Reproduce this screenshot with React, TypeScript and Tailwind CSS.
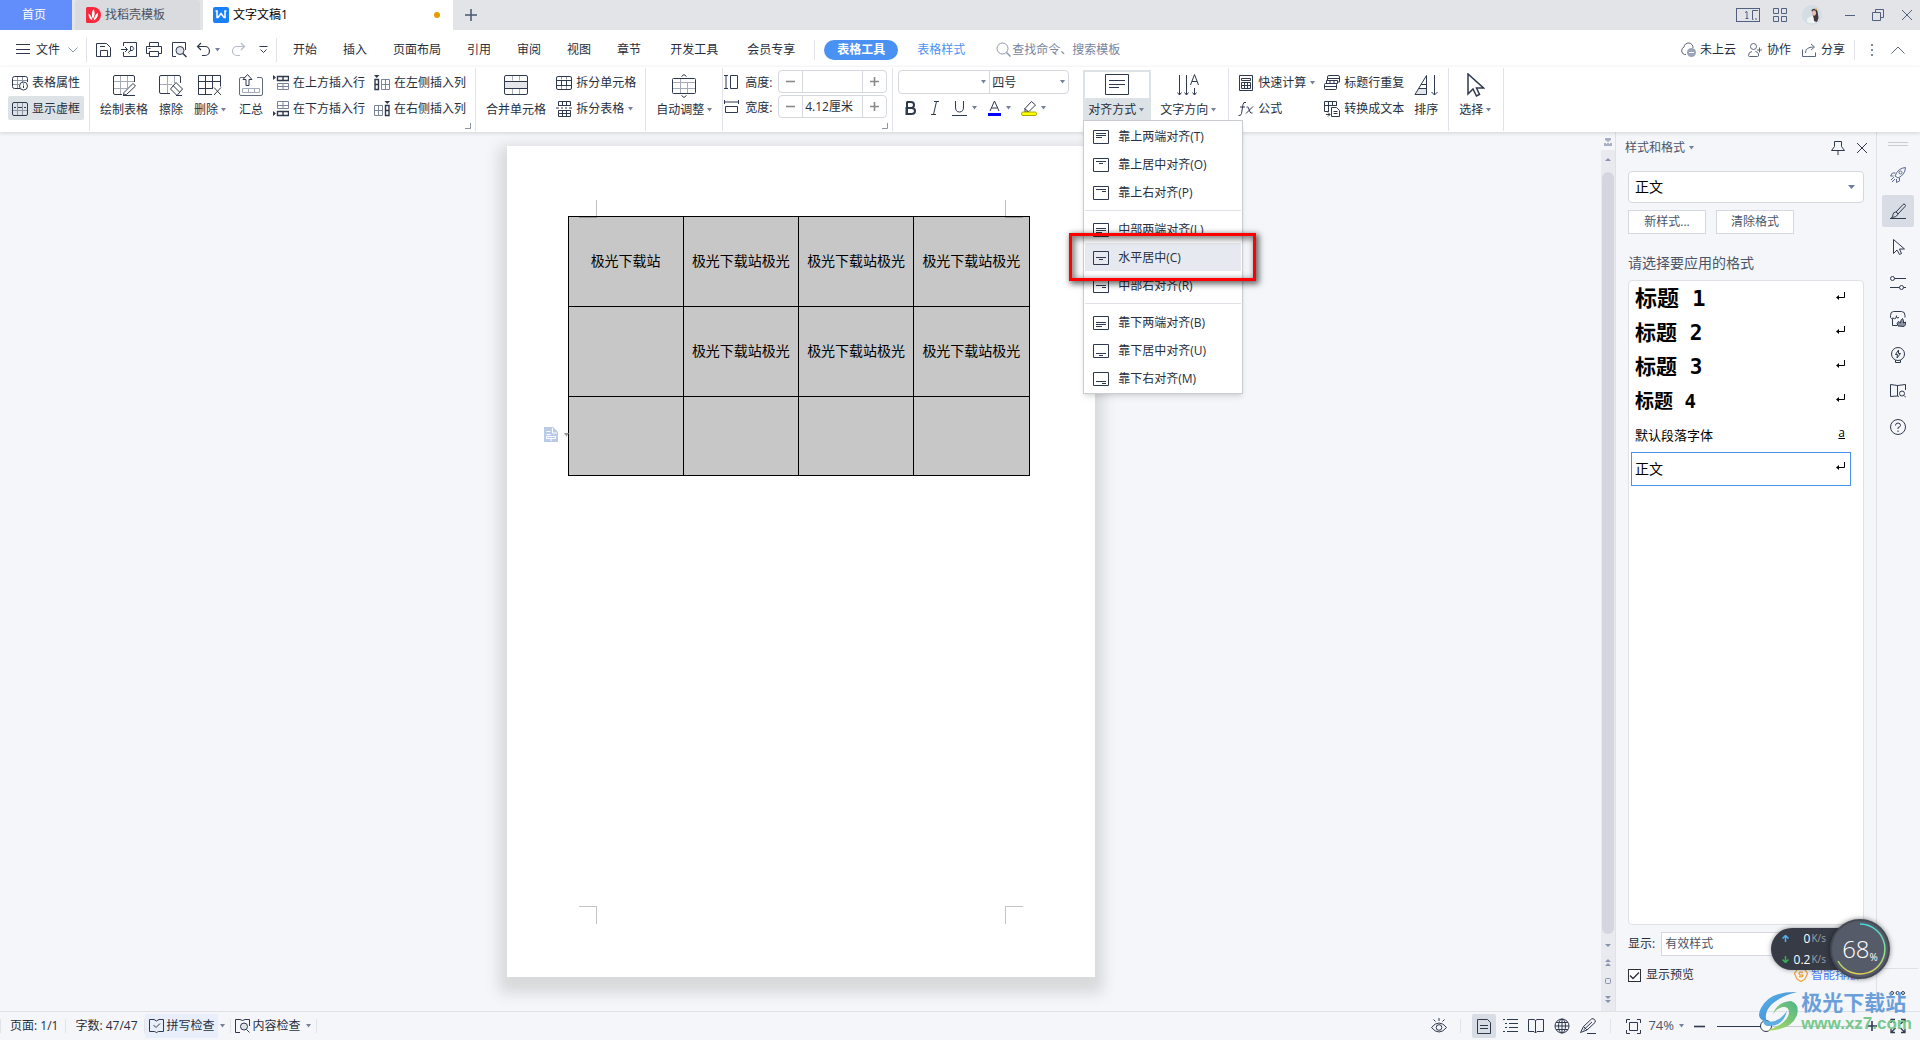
import { useState, type ReactNode } from "react";

const INK = "#2f394d";

interface IconProps {
  w?: number;
  h?: number;
  color?: string;
  className?: string;
  children: ReactNode;
}

function Icon({ w = 16, h = 16, color = INK, className = "", children }: IconProps) {
  return (
    <svg
      width={w}
      height={h}
      viewBox={`0 0 ${w} ${h}`}
      fill="none"
      stroke={color}
      className={`shrink-0 ${className}`}
      aria-hidden="true"
    >
      {children}
    </svg>
  );
}

function Caret({ className = "" }: { className?: string }) {
  return (
    <svg width="5" height="4" viewBox="0 0 5 4" fill="#75819b" className={`shrink-0 ${className}`} aria-hidden="true">
      <path d="M0 0h5L2.5 3.4z" />
    </svg>
  );
}

function Divider({ className = "" }: { className?: string }) {
  return <div className={`w-px shrink-0 bg-[#e1e3e8] ${className}`} />;
}

function BigButton({ icon, label, caret, className = "" }: { icon: ReactNode; label: string; caret?: boolean; className?: string }) {
  return (
    <button className={`flex flex-col items-center gap-1.5 self-start pt-[7px] shrink-0 ${className}`}>
      {icon}
      <span className="flex items-center gap-[3px] whitespace-nowrap">
        {label}
        {caret && <Caret />}
      </span>
    </button>
  );
}

function SmallButton({ icon, label, caret, className = "" }: { icon: ReactNode; label: string; caret?: boolean; className?: string }) {
  return (
    <button className={`flex h-6 items-center gap-1 pt-0.5 whitespace-nowrap ${className}`}>
      {icon}
      {label}
      {caret && <Caret />}
    </button>
  );
}

function SmallColumn({ children, className = "" }: { children: ReactNode; className?: string }) {
  return <div className={`flex shrink-0 flex-col gap-0.5 self-start pt-[3px] ${className}`}>{children}</div>;
}

function Corner() {
  return (
    <Icon w={6} h={6} color="#8b95a9" className="absolute right-1 bottom-[3px]">
      <path d="M5.5 0v5.5H0" />
    </Icon>
  );
}

/* ---------- title bar ---------- */

function TitleBar() {
  return (
    <header className="flex h-[30px] items-stretch bg-[#e2e4e8]">
      <button className="w-[72px] bg-[#628efb] pr-1 text-white">首页</button>
      <button className="ml-[3px] flex w-[125px] items-center gap-1 rounded-t-sm bg-[#d9dbde] pl-[11px] text-[#4a5161]">
        <svg width="15" height="16" viewBox="0 0 15 16" aria-hidden="true">
          <path d="M1.5 0H7a8 8 0 0 1 0 16H1.500Q0 16 0 14.500V1.500Q0 0 1.500 0z" fill="#f8273b" />
          <path d="M7.500 2q2.500 4-.5 10Q4.500 7 7.500 2zM2.500 6.500q3.500 2 3.800 7-3.800-2-3.800-7zM12 5.500q.5 5.500-4.200 8Q8 8.500 12 5.500z" fill="#fff" />
        </svg>
        找稻壳模板
      </button>
      <button className="ml-[3px] flex w-[250px] items-center gap-1 bg-white pl-2.5 text-black">
        <svg width="16" height="16" viewBox="0 0 16 16" aria-hidden="true">
          <rect width="16" height="16" rx="2" fill="#1a80f8" />
          <path d="M2.500 4h1.500v6.500h1l3-4 3 4h1V4h1.500" fill="none" stroke="#fff" strokeWidth="1.500" />
        </svg>
        文字文稿1
        <span className="mr-[13px] ml-auto size-1.5 rounded-full bg-[#e69b00]" />
      </button>
      <button aria-label="新建" className="ml-3 flex items-center">
        <Icon w={12} h={12} color="#4a5670">
          <path d="M6 0v12M0 6h12" strokeWidth="1.500" />
        </Icon>
      </button>
      <div className="ml-auto flex items-center pr-2">
        <Icon w={24} h={14} color="#52607f">
          <rect x=".5" y=".5" width="23" height="13" />
          <path d="M22 2.500h-5.500v9M16.500 11.500h1M19 11h2M9 4.500l2-1v7.500M9.500 10.500h3" />
        </Icon>
        <Icon w={14} h={14} color="#52607f" className="ml-[13px]">
          <path d="M.5.5h5v5h-5zM8.500.5h5v5h-5zM.5 8.500h5v5h-5zM8.500 8.500h5v5h-5z" />
        </Icon>
        <svg width="20" height="20" viewBox="0 0 20 20" className="ml-[15px]" aria-hidden="true">
          <circle cx="10" cy="10" r="10" fill="#d3dde3" />
          <path d="M9.500 5q3.500-3 6 1l1 7-1.500 4-3-1-1-5z" fill="#43363b" />
          <ellipse cx="12" cy="8" rx="2" ry="2.800" fill="#e7bfb5" />
          <path d="M5 14q3-3.500 6-3l1.500 7q-5 1-7.500-1z" fill="#edf2f3" />
          <circle cx="14" cy="4" r="1" fill="#dfb457" />
        </svg>
        <Divider className="ml-[10px] h-5 bg-[#c6c9d0]" />
        <button aria-label="最小化" className="ml-3">
          <Icon w={10} h={10} color="#52607f">
            <path d="M0 5.500h10" />
          </Icon>
        </button>
        <button aria-label="还原" className="ml-[17px]">
          <Icon w={12} h={12} color="#52607f">
            <path d="M.5 3.500h8v8h-8zM3.500 3.500v-3h8v8h-3" />
          </Icon>
        </button>
        <button aria-label="关闭" className="ml-[18px]">
          <Icon w={10} h={10} color="#52607f">
            <path d="M0 0l10 10M10 0L0 10" />
          </Icon>
        </button>
      </div>
    </header>
  );
}

/* ---------- menu row ---------- */

const tabs = ["开始", "插入", "页面布局", "引用", "审阅", "视图", "章节"];

function MenuRow() {
  return (
    <div className="flex h-[37px] items-center pt-0.5 pl-4 whitespace-nowrap">
      <button className="flex items-center">
        <Icon w={14} h={11}>
          <path d="M0 .5h14M0 5.500h14M0 9.500h14" />
        </Icon>
        <span className="ml-1.5">文件</span>
        <Icon w={10} h={6} color="#8b95a9" className="ml-2">
          <path d="M.5.5L5 5 9.500.5" />
        </Icon>
      </button>
      <Divider className="ml-2 h-6" />
      <div className="ml-[9px] flex items-center gap-[9px]">
        <button aria-label="保存">
          <Icon>
            <path d="M.5 1.500h10l4 4v9h-14zM4.500 14.500v-6h7v6M4 4.500h5" />
          </Icon>
        </button>
        <button aria-label="输出为PDF">
          <Icon>
            <path d="M2.500 4V.5h13v14h-13V10M0 7.500h6M4 5l2.500 2.500L4 10" />
            <path d="M8.500 11.500q-2-1-.5-2l1.500-.5V4.500h2q2.500 2 0 4H9.500" />
          </Icon>
        </button>
        <button aria-label="打印">
          <Icon>
            <path d="M3.500 4V.5h9V4M3.500 11.500h-3v-7h15v7h-3M3.500 9.500h9v5h-9zM2.500 6.500h2" />
          </Icon>
        </button>
        <button aria-label="打印预览">
          <Icon>
            <path d="M5 14.500H1.500V.5h13V8" />
            <circle cx="9" cy="8.500" r="4" fill="#dfe3e8" />
            <path d="M12 11.500l3.500 3.500" strokeWidth="1.500" />
          </Icon>
        </button>
        <button aria-label="撤销" className="flex items-center gap-[3px]">
          <Icon>
            <path d="M5 1L1.500 4.500 5 8M1.500 4.500H9a4.500 4.500 0 0 1 0 9H6" strokeWidth="1.200" />
          </Icon>
          <Caret />
        </button>
      </div>
      <button aria-label="恢复" className="ml-2.5">
        <Icon color="#b4bac6">
          <path d="M11 1l3.500 3.500L11 8M14.500 4.500H7a4.500 4.500 0 0 0 0 9h3" strokeWidth="1.200" />
        </Icon>
      </button>
      <button aria-label="自定义快速访问" className="ml-[13px]">
        <Icon w={9} h={8}>
          <path d="M.5.500h8M1.500 3.500l3 3 3-3" />
        </Icon>
      </button>
      <Divider className="ml-2 h-6" />
      <nav className="ml-4 flex items-center gap-[26px]">
        {tabs.map((t) => (
          <button key={t}>{t}</button>
        ))}
      </nav>
      <button className="ml-[29px]">开发工具</button>
      <button className="ml-[29px]">会员专享</button>
      <Divider className="ml-[19px] h-5" />
      <button className="ml-[9px] h-5 rounded-full bg-[#4991f2] px-[13px] font-bold text-white">表格工具</button>
      <button className="ml-[19px] text-[#4991f2]">表格样式</button>
      <label className="ml-[31px] flex items-center">
        <Icon w={15} h={15} color="#8b97ae">
          <circle cx="6.500" cy="6.500" r="5.500" />
          <path d="M10.500 10.500l4 4" strokeWidth="1.400" />
        </Icon>
        <input aria-label="查找" placeholder="查找命令、搜索模板" className="ml-px w-32 outline-none placeholder:text-[#7785a0]" />
      </label>
      <div className="ml-auto flex items-center pr-[15px]">
        <button className="flex items-center gap-1">
          <Icon color="#5c6679">
            <path d="M6 12.500H4.500A4 4 0 0 1 4 5a4.500 4.500 0 0 1 9 1" />
            <circle cx="11.500" cy="10.500" r="4.500" fill="#9aa4b8" stroke="none" />
            <path d="M9 10.500h5" stroke="#fff" />
          </Icon>
          未上云
        </button>
        <button className="ml-3 flex items-center gap-1">
          <Icon w={15} h={14} color="#5c6679">
            <circle cx="5.500" cy="3.500" r="3" />
            <path d="M4 8.500q-3.500.5-3.500 4 0 1 1 1h8q1.500 0 1-2.500-.5-2-3-2.500M11.500 4.500v5M9 7h5" />
          </Icon>
          协作
        </button>
        <button className="ml-[11px] flex items-center gap-[5px]">
          <Icon w={14} h={14} color="#5c6679">
            <path d="M.5 6.500v7h13v-4M3.500 10q0-6 8-6M9 1l3.500 3L9 7" />
          </Icon>
          分享
        </button>
        <Divider className="ml-[9px] h-5" />
        <button aria-label="更多" className="ml-4 text-[#7d879b]">
          <svg width="3" height="12" viewBox="0 0 3 12" fill="currentColor" aria-hidden="true">
            <path d="M0 0h2v2H0zM0 5h2v2H0zM0 10h2v2H0z" />
          </svg>
        </button>
        <button aria-label="折叠功能区" className="ml-[17px]">
          <Icon w={14} h={8} color="#5c6679">
            <path d="M.5 7.500L7 1l6.500 6.500" />
          </Icon>
        </button>
      </div>
    </div>
  );
}

/* ---------- ribbon ---------- */

function SizeBox({ id, label, value, icon }: { id: string; label: string; value: string; icon: ReactNode }) {
  const [v, setV] = useState(value);
  return (
    <div className="flex h-[23px] items-center">
      {icon}
      <label htmlFor={id} className="ml-[6px] w-7 pt-0.5">
        {label}
      </label>
      <div className="ml-[5px] flex h-[23px] w-[109px] rounded-sm border border-[#d5d8dd]">
        <button aria-label={`减小${label}`} className="flex w-6 items-center justify-center border-r border-[#d5d8dd]">
          <Icon w={9} h={9} color="#8a8a8a">
            <path d="M0 4.500h9" strokeWidth="1.600" />
          </Icon>
        </button>
        <input id={id} value={v} onChange={(e) => setV(e.target.value)} className="w-0 flex-1 pt-px pl-0.5 outline-none" />
        <button aria-label={`增大${label}`} className="flex w-6 items-center justify-center border-l border-[#d5d8dd]">
          <Icon w={9} h={9} color="#8a8a8a">
            <path d="M0 4.500h9M4.500 0v9" strokeWidth="1.600" />
          </Icon>
        </button>
      </div>
    </div>
  );
}

interface AlignItem {
  label: string;
  lines: string;
}

const alignGroups: AlignItem[][] = [
  [
    { label: "靠上两端对齐(T)", lines: "M3 3.500h10M3 5.500h10M3 7.500h6" },
    { label: "靠上居中对齐(O)", lines: "M3 3.500h10M6 5.500h4" },
    { label: "靠上右对齐(P)", lines: "M3 3.500h10M9 5.500h4" },
  ],
  [
    { label: "中部两端对齐(L)", lines: "M3 5.500h10M3 7.500h10M3 9.500h6" },
    { label: "水平居中(C)", lines: "M3 6.500h10M6 8.500h4" },
    { label: "中部右对齐(R)", lines: "M3 6.500h10M9 8.500h4" },
  ],
  [
    { label: "靠下两端对齐(B)", lines: "M3 6.500h10M3 8.500h10M3 10.500h6" },
    { label: "靠下居中对齐(U)", lines: "M3 9.500h10M6 11.500h4" },
    { label: "靠下右对齐(M)", lines: "M3 9.500h10M9 11.500h4" },
  ],
];

function AlignMenu() {
  return (
    <div className="absolute top-[50px] left-0 z-20 w-40 border border-[#c9ccd1] bg-white p-px shadow-md">
      {alignGroups.map((group, i) => (
        <div key={i}>
          {i > 0 && (
            <div className="flex h-[9px] items-center">
              <div className="h-px w-full bg-[#dfe1e6]" />
            </div>
          )}
          {group.map((item) => (
            <button
              key={item.label}
              className={`flex h-7 w-full items-center gap-[9px] pt-0.5 pl-2 whitespace-nowrap ${item.label === "水平居中(C)" ? "bg-[#e6e9ef]" : ""}`}
            >
              <Icon w={16} h={14}>
                <path d="M.5.5h15v13H.5z" />
                <path d={item.lines} />
              </Icon>
              {item.label}
            </button>
          ))}
        </div>
      ))}
      <div className="pointer-events-none absolute top-[112px] -left-[15px] h-12 w-[187px] border-[3px] border-[#fe0000] shadow-[2px_2px_6px_1px_rgba(0,0,0,0.6),inset_2px_2px_6px_1px_rgba(0,0,0,0.5)]" />
    </div>
  );
}

function Ribbon() {
  return (
    <div className="relative z-10 flex h-[65px] items-stretch bg-white pl-2 shadow-[0_1px_4px_rgba(0,0,0,0.15)]">
      <SmallColumn>
        <SmallButton
          className="px-1"
          label="表格属性"
          icon={
            <Icon>
              <path d="M1 5.500h14M1 9.500h6M5.500 2v12M10.500 2v5" stroke="#8d95a3" />
              <path d="M8 13.500H2.500q-2 0-2-2v-8q0-2 2-2h11q2 0 2 2V7" />
              <circle cx="11.500" cy="11" r="4" fill="#fff" />
              <path d="M11.500 10.500V13M11.500 8.500v1" />
            </Icon>
          }
        />
        <SmallButton
          className="rounded-xs bg-[#dde2e7] px-1"
          label="显示虚框"
          icon={
            <Icon>
              <path d="M1 9.500h14M5.500 2v12M10.500 2v12" stroke="#8d95a3" />
              <rect x=".5" y="1.500" width="15" height="13" rx="1.500" />
              <path d="M2 6.500h2M6 6.500h4M12 6.500h2" />
            </Icon>
          }
        />
      </SmallColumn>
      <Divider className="ml-[5px] my-px" />

      <BigButton
        className="ml-2.5"
        label="绘制表格"
        icon={
          <Icon w={24} h={22}>
            <path d="M8.500 1v19M15.500 1v13M1 7.500h21M1 14.500h14" stroke="#a6acb7" />
            <path d="M10 20.500H3Q1.500 20.500 1.500 19V3q0-1.500 1.500-1.500h18q1.500 0 1.500 1.500v5" />
            <path d="M12 18.500l9-9 2.500 2.500-9 8.500-3 .5z" fill="#fff" />
            <path d="M11 21.500h12" />
          </Icon>
        }
      />
      <BigButton
        className="ml-[11px]"
        label="擦除"
        icon={
          <Icon w={24} h={22}>
            <path d="M8.500 1v19M15.500 1v8M1 10.500h12" stroke="#a6acb7" />
            <path d="M11 19.500H2Q.5 19.500.5 18V3Q.5 1.500 2 1.500h18q1.500 0 1.500 1.500v6M17 8.500l6.500 6.500-5.500 6.500-6.500-6.500zM14 11.500l6.500 6.500M17 21.500h6" />
          </Icon>
        }
      />
      <BigButton
        className="ml-[11px]"
        label="删除"
        caret
        icon={
          <Icon w={24} h={22}>
            <path d="M14 20.500H.5v-19h22v11M.5 7.500h22M.5 14.500H15M7.500 1.500v19M14.500 1.500v13" />
            <path d="M16 13.500l7 7.500M23 13.500L16 21" />
          </Icon>
        }
      />
      <BigButton
        className="ml-[13px]"
        label="汇总"
        icon={
          <Icon w={24} h={22}>
            <path d="M6 3.500H2Q.5 3.500.5 5v15q0 1.500 1.500 1.500h20q1.500 0 1.500-1.500V5q0-1.500-1.500-1.500h-4" stroke="#626b7b" />
            <path d="M3.500 14.500h17v4h-17zM9.500 14.500v4M15.500 14.500v4" stroke="#a6acb7" />
            <path d="M4 5.500L8.500.5l4.500 5h-3v6H7v-6z" fill="#fff" />
          </Icon>
        }
      />
      <SmallColumn className="ml-2.5">
        <SmallButton
          label="在上方插入行"
          icon={
            <Icon>
              <path d="M4.500 8.500h11v6h-11zM10 8.500v6M4.500 11.500h11" stroke="#7b8494" />
              <path d="M4.500 1.500h11v4h-11zM10 1.500v4" strokeWidth="1.400" />
              <path d="M0 0l3 2.500L0 5z" fill={INK} stroke="none" />
            </Icon>
          }
        />
        <SmallButton
          label="在下方插入行"
          icon={
            <Icon>
              <path d="M4.500.5h11v7h-11zM10 .5v7M4.500 4.500h11" stroke="#7b8494" />
              <path d="M4.500 10.500h11v4h-11zM10 10.500v4" strokeWidth="1.400" />
              <path d="M0 10l3 2.500L0 15z" fill={INK} stroke="none" />
            </Icon>
          }
        />
      </SmallColumn>
      <SmallColumn className="ml-[9px]">
        <SmallButton
          label="在左侧插入列"
          icon={
            <Icon>
              <path d="M7.500 4.500h8v10h-8zM7.500 9.500h8M11.500 4.500v10" stroke="#7b8494" />
              <path d="M1 4.500h3.500v10H1zM1 9.500h3.500" strokeWidth="1.400" />
              <path d="M0 0h5.500L2.700 3z" fill={INK} stroke="none" />
            </Icon>
          }
        />
        <SmallButton
          label="在右侧插入列"
          icon={
            <Icon>
              <path d="M.5 4.500h8v10h-8zM.5 9.500h8M4.500 4.500v10" stroke="#7b8494" />
              <path d="M11.500 4.500H15v10h-3.500zM11.500 9.500H15" strokeWidth="1.400" />
              <path d="M10.500 0H16l-2.700 3z" fill={INK} stroke="none" />
            </Icon>
          }
        />
      </SmallColumn>
      <div className="relative w-[9px]">
        <Corner />
      </div>
      <Divider className="my-px" />

      <BigButton
        className="ml-2.5"
        label="合并单元格"
        icon={
          <Icon w={24} h={22}>
            <path d="M8.500 1.500v5M15.500 1.500v5M8.500 15v5M15.500 15v5" stroke="#a6acb7" />
            <rect x=".5" y="1.500" width="23" height="19" rx="1.500" />
            <path d="M.5 7.500h23v7H.5z" fill="#e4e6e9" />
          </Icon>
        }
      />
      <SmallColumn className="ml-2.5">
        <SmallButton
          label="拆分单元格"
          icon={
            <Icon>
              <path d="M5.500 1.500v3M10.500 1.500v3M5.500 11v3M10.500 11v3" stroke="#8d95a3" />
              <rect x=".5" y="1.500" width="15" height="13" rx="1.500" />
              <path d="M.5 5.500h15v5H.5zM5.500 5.500v5M10.500 5.500v5" />
            </Icon>
          }
        />
        <SmallButton
          label="拆分表格"
          caret
          icon={
            <Icon>
              <path d="M2.500 5V.5h12V5M2.500 4.500h12M6.500.5v4M10.500.5v4M2.500 9.500h12v6h-12zM2.500 12.500h12M6.500 9.500v6M10.500 9.500v6" />
              <path d="M0 7h3M5 7h2M9 7h2M13 7h3" />
            </Icon>
          }
        />
      </SmallColumn>
      <Divider className="ml-[9px] my-px" />

      <BigButton
        className="ml-2.5"
        label="自动调整"
        caret
        icon={
          <Icon w={24} h={24} className="-mb-0.5">
            <path d="M8.500 4v16M15.500 9v11M1 8.500h22M1 14.500h22" stroke="#a6acb7" />
            <rect x=".5" y="4.500" width="23" height="15" rx="1" />
            <path d="M9.500 2.500l2.500-2 2.500 2M9.500 21.500l2.500 2 2.500-2" />
          </Icon>
        }
      />
      <Divider className="ml-2.5 my-px" />

      <div className="flex flex-col gap-0.5 self-start pt-[3px] pl-px">
        <SizeBox
          id="row-height"
          label="高度:"
          value=""
          icon={
            <Icon w={15} h={16}>
              <path d="M0 1.500h4M0 14.500h4M2 1.500v13M6.500 1.500h7v13h-7z" />
            </Icon>
          }
        />
        <SizeBox
          id="col-width"
          label="宽度:"
          value="4.12厘米"
          icon={
            <Icon w={15} h={16}>
              <path d="M.5 1v4M14.500 1v4M.5 3h14M1.500 7.500h12v6h-12z" />
            </Icon>
          }
        />
      </div>
      <div className="relative w-[5px]">
        <Corner />
      </div>
      <Divider className="my-px" />

      <div className="ml-[5px] flex flex-col self-start pt-[3px]">
        <div className="flex h-6 w-[171px] rounded-sm border border-[#d5d8dd]">
          <div className="relative w-[91px] border-r border-[#d5d8dd]">
            <select aria-label="字体" className="h-full w-full appearance-none outline-none">
              <option></option>
            </select>
            <Caret className="pointer-events-none absolute top-[9px] right-[3px]" />
          </div>
          <div className="relative flex-1">
            <select aria-label="字号" className="h-full w-full appearance-none pt-0.5 pl-0.5 outline-none">
              <option>四号</option>
              <option>小四</option>
            </select>
            <Caret className="pointer-events-none absolute top-[9px] right-[3px]" />
          </div>
        </div>
        <div className="flex h-7 items-center pl-[7px]">
          <button aria-label="加粗">
            <Icon w={11} h={14}>
              <path d="M1.500 1h4.500q3 0 3 3t-3 3H1.500M1.500 7h5q3.500 0 3.500 3t-3.500 3h-5zM2 1v12" strokeWidth="2" />
            </Icon>
          </button>
          <button aria-label="倾斜" className="ml-[15px]">
            <Icon w={8} h={14}>
              <path d="M3 .5h5M0 13.500h5M5.500.5l-3 13" />
            </Icon>
          </button>
          <button aria-label="下划线" className="ml-[13px] flex items-center gap-[5px]">
            <Icon w={15} h={16}>
              <path d="M3.500 1v6q0 5 4 5t4-5V1M0 15.500h15" />
            </Icon>
            <Caret />
          </button>
          <button aria-label="字体颜色" className="ml-2.5 flex items-center gap-1">
            <Icon w={15} h={16}>
              <path d="M3 11L7.500 1 12 11M4.500 8h6" />
              <path d="M1 14.500h13" stroke="#0000fe" strokeWidth="3" />
            </Icon>
            <Caret />
          </button>
          <button aria-label="突出显示" className="ml-2.5 flex items-center gap-1">
            <Icon>
              <path d="M4 8.500L10.500 1.500l4 3.500-6.500 6.500-4 .5zM3.500 8.500l4.500 3.500" />
              <rect x=".5" y="12" width="15" height="3.500" rx="1.500" fill="#feff00" stroke="#a9a900" />
            </Icon>
            <Caret />
          </button>
        </div>
      </div>

      <div className="relative ml-3.5 w-[68px] self-start pt-[3px] text-left">
        <button className="flex h-[50px] w-full flex-col items-center border-2 border-b-0 border-[#dde2e7] bg-white">
          <Icon w={24} h={22} className="mt-[2px]">
            <path d="M.5.5h23v20H.5z" />
            <path d="M4 6.500h16M4 10.500h16M4 13.500h10" />
          </Icon>
          <span className="mt-[2px] flex flex-1 items-center gap-[3px] self-stretch bg-[#dde2e7] pt-0.5 pl-[3px] whitespace-nowrap">
            对齐方式
            <Caret />
          </span>
        </button>
        <div className="absolute top-[3px] left-0">
          <AlignMenu />
        </div>
      </div>
      <BigButton
        className="ml-[9px]"
        label="文字方向"
        caret
        icon={
          <Icon w={22} h={22}>
            <path d="M2.500 1v20M.5 18.500l2 2.500 2-2.500M9.500 1v20M7.500 18.500l2 2.500 2-2.500M17.500 14v7M15.500 18.500l2 2.500 2-2.500" />
            <path d="M13.500 11L17.500.5l4 10.500M15 7.500h5" />
          </Icon>
        }
      />
      <Divider className="ml-3 my-px" />

      <SmallColumn className="ml-[9px]">
        <SmallButton
          label="快速计算"
          caret
          icon={
            <Icon>
              <path d="M1.500.5h13v15h-13zM3.500 3.500h9v2h-9zM3.500 7.500h9v6h-9zM3.500 10.500h9M6.500 7.500v6M9.500 7.500v6" />
            </Icon>
          }
        />
        <SmallButton
          label="公式"
          icon={
            <Icon>
              <path d="M8 1.500q-2.500-1-3 2l-1.500 9q-.5 2.500-3 2M2 6h5M8.500 6q1.500-.5 2 1l1.500 4q.5 1.500 2.500 1M15 5.500L8 12.500" />
            </Icon>
          }
        />
      </SmallColumn>
      <SmallColumn className="ml-[9px]">
        <SmallButton
          label="标题行重复"
          icon={
            <Icon>
              <path d="M3.500 5V2q0-1.500 1.500-1.500h9q1.500 0 1.500 1.500v5H13M4 3.500h11" />
              <rect x=".5" y="8.500" width="12" height="6" rx="1" />
              <path d="M2.500 5.500h11v3h-11zM6 5.500v3M10 5.500v3M.5 11.500h12" />
            </Icon>
          }
        />
        <SmallButton
          label="转换成文本"
          icon={
            <Icon>
              <path d="M5 10.500H.5V.5h12V5M.5 4.500h12M4.500.5v10M8.500.5v4M2 13.500h4M4 11.500l2 2-2 2" />
              <path d="M7.500 6.500h5l3 3v6h-8zM9.500 10.500h4M9.500 12.500h4" fill="#fff" />
            </Icon>
          }
        />
      </SmallColumn>
      <BigButton
        className="ml-2.5"
        label="排序"
        icon={
          <Icon w={24} h={22}>
            <path d="M1.500 20l3-5.500h8V20z" fill="#e4e6e9" stroke="none" />
            <path d="M1 20.500L12.500 1.500v19zM4.500 14.500h8M7 10.500h5.500M20.500 1v20M17.500 18l3 3 3-3" />
          </Icon>
        }
      />
      <Divider className="ml-2.5 my-px" />
      <BigButton
        className="ml-2.5"
        label="选择"
        caret
        icon={
          <Icon w={20} h={24} className="-mt-px -mb-px">
            <path d="M3 1v20l5-5 3.500 7 3-1.500-3-6.500h7z" strokeWidth="1.500" />
          </Icon>
        }
      />
      <Divider className="ml-3 my-px" />
    </div>
  );
}

/* ---------- document ---------- */

const rows = [
  ["极光下载站", "极光下载站极光", "极光下载站极光", "极光下载站极光"],
  ["", "极光下载站极光", "极光下载站极光", "极光下载站极光"],
  ["", "", "", ""],
];

function Editor() {
  return (
    <main className="flex flex-1 justify-center overflow-hidden pt-3.5 pb-[34px]">
      <div className="relative w-[588px] bg-white pt-[70px] pl-[61px] shadow-[0_8px_14px_8px_rgba(0,0,0,0.12)]">
        <table className="w-[462px] table-fixed border-collapse bg-[#c7c7c7] text-sm leading-5 text-black">
          <tbody>
            {rows.map((row, r) => (
              <tr key={r} className={r === 2 ? "h-[79px]" : "h-[90px]"}>
                {row.map((cell, c) => (
                  <td key={c} className="border border-black p-0 pb-0.5 text-center whitespace-nowrap">
                    {cell}
                  </td>
                ))}
              </tr>
            ))}
          </tbody>
        </table>
        {/* margin corner marks */}
        <div className="absolute top-[54px] left-[72px] h-[18px] w-[18px] border-r border-b border-black/25" />
        <div className="absolute top-[54px] left-[498px] h-[18px] w-[18px] border-b border-l border-black/25" />
        <div className="absolute bottom-[53px] left-[72px] h-[18px] w-[18px] border-t border-r border-[#c4c4c4]" />
        <div className="absolute bottom-[53px] left-[498px] h-[18px] w-[18px] border-t border-l border-[#c4c4c4]" />
        <div className="absolute top-[281px] left-[37px] flex items-center gap-1.5">
          <svg width="14" height="15" viewBox="0 0 14 15" aria-hidden="true">
            <path d="M0 0h9l5 5v10H0z" fill="#b9cbe8" />
            <path d="M8.500 1v5H13M2.500 4.500h4M2.500 7.500h4M2.500 9.500h9v2h-9zM7 11v3" fill="none" stroke="#fff" />
          </svg>
          <svg width="5" height="4" viewBox="0 0 5 4" fill="#9a9a9a" aria-hidden="true">
            <path d="M0 0h5L2.500 3.400z" />
          </svg>
        </div>
      </div>
    </main>
  );
}

function ScrollBar() {
  return (
    <div className="flex w-3.5 flex-col items-center bg-[#e9eaf0]">
      <div className="flex h-[18px] w-full items-center justify-center bg-[#f5f6f9] pt-0.5">
        <svg width="8" height="8" viewBox="0 0 8 8" fill="#a9b0c3" aria-hidden="true">
          <path d="M1 0h6v2L4 4 1 2zM0 5h2v1h1V5h2v1h1V5h2v3H0z" />
        </svg>
      </div>
      <svg width="14" height="22" viewBox="0 0 14 22" fill="#8a93ad" aria-hidden="true">
        <path d="M4 11h6L7 8z" />
      </svg>
      <div className="w-3 flex-1 rounded-full bg-[#d4d6df]" />
      <svg width="14" height="77" viewBox="0 0 14 77" fill="#8a93ad" aria-hidden="true">
        <path d="M4 10h6l-3 3zM4 28l3-3 3 3zM4 32l3-3 3 3zM4 62h6l-3 3zM4 66h6l-3 3z" />
        <rect x="4.500" y="44.500" width="5" height="5" rx="1" fill="none" stroke="#8a93ad" />
      </svg>
    </div>
  );
}

/* ---------- style pane ---------- */

const styles = [
  { name: "标题 1", cls: "font-['DejaVu_Sans_Mono','Noto_Sans_CJK_SC',monospace] text-[22px] font-bold" },
  { name: "标题 2", cls: "font-['DejaVu_Sans_Mono','Noto_Sans_CJK_SC',monospace] text-[21px] font-bold" },
  { name: "标题 3", cls: "font-['DejaVu_Sans_Mono','Noto_Sans_CJK_SC',monospace] text-[21px] font-bold" },
  { name: "标题 4", cls: "font-['DejaVu_Sans_Mono','Noto_Sans_CJK_SC',monospace] text-[19px] font-bold" },
  { name: "默认段落字体", cls: "text-[13px]" },
  { name: "正文", cls: "text-sm" },
];

function StylePane() {
  const [preview, setPreview] = useState(true);
  return (
    <aside className="flex w-[261px] flex-col border-l border-[#dfe1e7] pr-3 pl-3">
      <div className="-mx-[3px] flex h-8 items-center text-[#4b5568]">
        <button className="flex items-center gap-1">
          样式和格式
          <Caret />
        </button>
        <button aria-label="固定" className="ml-auto">
          <Icon w={14} h={14}>
            <path d="M3.500.5h7v5l3 4H.5l3-4zM7 9.500V14" />
          </Icon>
        </button>
        <button aria-label="关闭窗格" className="ml-3">
          <Icon w={10} h={10}>
            <path d="M0 0l10 10M10 0L0 10" />
          </Icon>
        </button>
      </div>
      <div className="relative mt-[7px]">
        <select aria-label="当前样式" className="h-8 w-full appearance-none rounded-sm border border-[#d5d8df] bg-white pl-1.5 text-sm text-black outline-none">
          <option>正文</option>
          <option>标题 1</option>
        </select>
        <svg width="7" height="4" viewBox="0 0 7 4" fill="#6b7ba0" className="pointer-events-none absolute top-3.5 right-[9px]" aria-hidden="true">
          <path d="M0 0h7L3.500 4z" />
        </svg>
      </div>
      <div className="mt-[7px] flex gap-2.5 text-[#4b5568]">
        <button className="h-6 w-[78px] border border-[#d5d8df] bg-white">新样式...</button>
        <button className="h-6 w-[78px] border border-[#d5d8df] bg-white">清除格式</button>
      </div>
      <p className="mt-[19px] text-sm leading-5 text-[#4b5568]">请选择要应用的格式</p>
      <ul className="mt-[7px] flex-1 rounded-sm border border-[#dfe1e7] bg-white pt-px pr-3 pl-0.5 text-black">
        {styles.map((s, i) => (
          <li key={s.name}>
            <button className={`flex h-[34px] w-full items-center justify-between border pr-[5px] pl-[3px] ${i === 5 ? "border-[#4991f2]" : "border-transparent"}`}>
              <span className={`leading-6 ${s.cls}`}>{s.name}</span>
              {i === 4 ? (
                <span className="self-start pt-1.5 underline">a</span>
              ) : (
                <svg width="9" height="8" viewBox="0 0 9 8" fill="none" stroke="#000" className="mt-[9px] self-start" aria-hidden="true">
                  <path d="M8.500 0v5.500H1" />
                  <path d="M3 3v5L0 5.500z" fill="#000" stroke="none" />
                </svg>
              )}
            </button>
          </li>
        ))}
      </ul>
      <div className="mt-[7px] flex h-6 items-center gap-1.5">
        <label htmlFor="show">显示:</label>
        <select id="show" className="h-6 flex-1 appearance-none border border-[#d5d8df] bg-white pl-[3px] text-[#4b5568] outline-none">
          <option>有效样式</option>
          <option>所有样式</option>
        </select>
      </div>
      <div className="mt-[9px] mb-[26px] flex h-5 items-center">
        <label className="relative flex items-center gap-[5px]">
          <input
            type="checkbox"
            checked={preview}
            onChange={(e) => setPreview(e.target.checked)}
            className="peer size-[13px] appearance-none border border-[#2b2f38] bg-white"
          />
          <Icon w={13} h={13} color="#2b2f38" className="pointer-events-none absolute left-0 invisible peer-checked:visible">
            <path d="M2 6.500L5 9.500 11 3.500" strokeWidth="1.300" />
          </Icon>
          显示预览
        </label>
        <a href="#smart" className="mr-[5px] ml-auto flex items-center gap-[3px] text-[#4d7cf5]">
          <Icon w={14} h={14} color="#f0a63c">
            <path d="M4 .5h6l3.500 5L11 11l-4 2.500L3 11 .5 5.500zM9 4.500q-4-1-4 1t4 1.500q0 2.500-4 1.500" strokeWidth="1.300" />
          </Icon>
          智能排版
        </a>
      </div>
    </aside>
  );
}

const tools: { name: string; icon: ReactNode }[] = [
  {
    name: "快速启动",
    icon: (
      <g stroke="#5c6b94">
        <path d="M5 9q3-8 10.500-8.500Q15 8 8 11zM5.500 6H2.500L.5 9h3M9.500 11v3l-3 1.500V12M4 10l-3 3M2 15l3-3" />
        <circle cx="10.500" cy="5.500" r="1.500" />
      </g>
    ),
  },
  { name: "样式", icon: <path d="M0 15.500h16M6 9l7-7.500q1-1 2 0t0 2L8 11M5.500 9q2 0 2.500 2.500-2 3-6.500 3 1.500-1 1.500-3t2.500-2.500z" /> },
  { name: "选择", icon: <path d="M3.500.5v14l3.500-3.500 2.500 4.500 2-1-2-4.500h5z" /> },
  {
    name: "设置",
    icon: (
      <>
        <circle cx="2.500" cy="3.500" r="2" />
        <circle cx="11.500" cy="12.500" r="2" />
        <path d="M4.500 3.500H16M0 12.500h9.500M13.500 12.500H16" />
      </>
    ),
  },
  {
    name: "素材",
    icon: (
      <>
        <path d="M7 14.500H2.500v-7M.5 4.500q0-4 3-4h8q3.500 0 3.500 4v2M.5 4.500v2q1 2 2.500.5 1.500 1.500 3 0l.5-2.500M6.500 5.500q.5 2.500 2.500 1" />
        <path d="M8 15q-2-3 .5-4.500l2 1.500q0-3 2-4.500 1.500 2 1 4.500l2-1q1 3-1.500 4.500z" fill="#8b93a3" />
      </>
    ),
  },
  {
    name: "灵感",
    icon: (
      <>
        <path d="M5.500 13v2.500h5V13" />
        <circle cx="8" cy="7" r="6.500" />
        <path d="M8.500 3L5.500 7.500H7.500L7 11l3.500-4.500H8.500z" />
      </>
    ),
  },
  {
    name: "查找资源",
    icon: (
      <>
        <path d="M9 13.500L7.500 13 .5 13.500v-12l7 1 8-1V7M7.500 2.500V13" />
        <circle cx="12" cy="10.500" r="2.500" />
        <path d="M14 12.500l2 2" />
      </>
    ),
  },
  {
    name: "帮助",
    icon: (
      <>
        <circle cx="8" cy="8" r="7.500" />
        <path d="M5.500 6.500Q5.500 4 8 4t2.500 2.500Q10.500 8 8 8.500V10M8 11.500V13" />
      </>
    ),
  },
];

function ToolRail() {
  return (
    <div className="flex w-11 flex-col items-center border-l border-[#dfe1e7] pr-0.5">
      <div className="mt-2.5 h-1 w-5 border-y border-[#c9ccd3]" />
      <div className="mt-[13px] flex flex-col gap-1">
        {tools.map((t) => (
          <button
            key={t.name}
            aria-label={t.name}
            className={`flex size-8 items-center justify-center rounded-xs ${t.name === "样式" ? "bg-[#d8dde5]" : ""}`}
          >
            <Icon>{t.icon}</Icon>
          </button>
        ))}
      </div>
      <div className="mt-auto h-px w-full bg-[#dfe1e7]" />
      <button aria-label="更多工具" className="mt-[22px] mb-4">
        <Icon w={15} h={4}>
          <circle cx="2" cy="2" r="1.500" />
          <circle cx="7.500" cy="2" r="1.500" />
          <circle cx="13" cy="2" r="1.500" />
        </Icon>
      </button>
    </div>
  );
}

/* ---------- status bar ---------- */

function StatusBar() {
  const [zoom, setZoom] = useState(74);
  return (
    <footer className="flex h-[29px] items-center border-t border-[#dfe1e7] whitespace-nowrap">
      <Divider className="h-3.5" />
      <span className="ml-[9px]">页面: 1/1</span>
      <Divider className="ml-[7px] h-3.5" />
      <span className="ml-[9px]">字数: 47/47</span>
      <Divider className="ml-1.5 h-3.5" />
      <button className="flex h-6 items-center gap-[3px] bg-[#e8effb] pr-[3px] pl-1">
        <Icon w={15} h={14}>
          <path d="M5 .5H.5v12h5l2 1 2-1h5V.5H10L7.500 2zM4.500 6l2.500 2.500 4-4" />
        </Icon>
        拼写检查
      </button>
      <Caret className="ml-0.5" />
      <Divider className="ml-[5px] h-3.5" />
      <button className="ml-1 flex items-center gap-[3px]">
        <Icon w={15} h={14}>
          <path d="M5 13.500H.5V.5H5l2.500 1L10 .5h4.500V7" />
          <circle cx="9" cy="7.500" r="3.500" fill="#dfe3e8" />
          <path d="M11.500 10.500l3 3" />
        </Icon>
        内容检查
        <Caret className="ml-0.5" />
      </button>
      <Divider className="ml-[5px] h-3.5" />

      <div className="ml-auto flex items-center pr-3.5">
        <button aria-label="护眼模式">
          <Icon>
            <path d="M.5 9.500Q4 5 8 5t7.500 4.500Q12 14 8 14T.5 9.500zM8 0v3M2.500 1.500l2 2M13.500 1.500l-2 2" />
            <circle cx="8" cy="9.500" r="2.800" />
          </Icon>
        </button>
        <Divider className="ml-[13px] h-3.5" />
        <button aria-label="页面视图" className="ml-[11px] flex size-6 items-center justify-center rounded-xs bg-[#d8dde5]">
          <Icon w={14} h={15}>
            <path d="M.5.500h10l3 3v11H.5zM3 6.500h8M3 9.500h8" />
          </Icon>
        </button>
        <button aria-label="大纲" className="ml-[7px]">
          <Icon>
            <path d="M0 1.500h2M4 1.500h11M2 5.500h2M6 5.500h9M2 9.500h2M6 9.500h9M0 13.500h2M4 13.500h11" />
          </Icon>
        </button>
        <button aria-label="阅读版式" className="ml-[9px]">
          <Icon>
            <path d="M.5 1.500H6l1.500 1 1.500-1h6.500v12H9l-1.500 1.500L6 13.500H.5zM7.500 2.500V15" />
          </Icon>
        </button>
        <button aria-label="Web版式" className="ml-2.5">
          <Icon>
            <circle cx="8" cy="8" r="7" />
            <ellipse cx="8" cy="8" rx="3.500" ry="7" />
            <path d="M8 1v14M2 4.500h12M1 8h14M2 11.500h12" />
          </Icon>
        </button>
        <button aria-label="写作模式" className="ml-2.5">
          <Icon>
            <path d="M3.500 8.500l8-7.500q1.500-1 3 .5t.5 3l-8 7.500zM3.500 8.500L.5 14.500l6.500-2.500M7 15.500h9M3.500 12L12 4" />
          </Icon>
        </button>
        <Divider className="ml-3.5 h-3.5" />
        <button aria-label="最佳显示比例" className="ml-[15px]">
          <Icon w={15} h={15}>
            <path d="M.5 4V.5H4M11 .5h3.500V4M14.500 11v3.500H11M4 14.500H.5V11M3.500 3.500h8v8h-8z" />
          </Icon>
        </button>
        <span className="ml-[7px] text-[13px] text-[#4b5568]">{zoom}%</span>
        <Caret className="ml-[5px]" />
        <button aria-label="缩小" className="ml-2.5" onClick={() => setZoom(zoom - 1)}>
          <Icon w={11} h={11}>
            <path d="M0 5.500h11" strokeWidth="1.600" />
          </Icon>
        </button>
        <input
          type="range"
          aria-label="显示比例"
          min={10}
          max={210}
          value={zoom}
          onChange={(e) => setZoom(Number(e.target.value))}
          className="ml-3 h-3 w-[145px] appearance-none bg-[linear-gradient(to_right,#2f394d_34%,#c5cad3_34%)] bg-[length:100%_1px] bg-center bg-no-repeat [&::-webkit-slider-thumb]:size-3 [&::-webkit-slider-thumb]:appearance-none [&::-webkit-slider-thumb]:rounded-full [&::-webkit-slider-thumb]:border [&::-webkit-slider-thumb]:border-[#2f394d] [&::-webkit-slider-thumb]:bg-white"
        />
        <button aria-label="放大" className="ml-[5px]" onClick={() => setZoom(zoom + 1)}>
          <Icon w={10} h={10}>
            <path d="M0 5h10M5 0v10" strokeWidth="1.600" />
          </Icon>
        </button>
        <button aria-label="全屏" className="ml-[13px]">
          <Icon>
            <path d="M1 5V1.500h4M11 1.500h4V5M15 11v3.500h-4M5 14.500H1V11M1.500 2l4 4M14.500 2l-4 4M14.500 14l-4-4M1.500 14l4-4" strokeWidth="1.300" />
          </Icon>
        </button>
      </div>
    </footer>
  );
}

/* ---------- floating pieces ---------- */

function NetMeter() {
  return (
    <div className="absolute right-[30px] bottom-[61px] z-30 flex items-center">
      <div className="-mr-8 flex h-[42px] w-[91px] flex-col justify-center rounded-l-full bg-[#363b46] pr-9 pl-[11px] text-white shadow-[0_0_5px_rgba(0,0,0,0.4)]">
        <div className="flex h-[21px] items-center">
          <Icon w={7} h={7} color="#4cb4f5">
            <path d="M3.500 7V1M.5 3.500l3-3 3 3" strokeWidth="1.500" />
          </Icon>
          <span className="ml-auto">0</span>
          <span className="pl-px text-[10px] text-[#9aa0ab]">K/s</span>
        </div>
        <div className="flex h-[21px] items-center">
          <Icon w={7} h={7} color="#35b44a">
            <path d="M3.500 0v6M.5 3.500l3 3 3-3" strokeWidth="1.500" />
          </Icon>
          <span className="ml-auto">0.2</span>
          <span className="pl-px text-[10px] text-[#9aa0ab]">K/s</span>
        </div>
      </div>
      <div className="relative flex size-[60px] items-center justify-center rounded-full border-2 border-[#454954] bg-[#565b69] text-white shadow-[0_0_5px_rgba(0,0,0,0.5)]">
        <svg width="56" height="56" viewBox="0 0 56 56" fill="none" strokeWidth="1.500" className="absolute" aria-hidden="true">
          <defs>
            <linearGradient id="ring" x1="0" y1="0" x2="0" y2="1">
              <stop offset="0" stopColor="#43e0dc" />
              <stop offset=".6" stopColor="#8ee08a" />
              <stop offset="1" stopColor="#e5cf52" />
            </linearGradient>
          </defs>
          <path d="M28 3a25 25 0 1 1-22 37" stroke="url(#ring)" />
        </svg>
        <span className="text-[24px] leading-8 font-light">68</span>
        <span className="self-end pb-[13px] text-[10px]">%</span>
      </div>
    </div>
  );
}

function SiteMark() {
  return (
    <div className="pointer-events-none absolute right-2 bottom-1.5 z-30 flex items-center gap-px">
      <svg width="42" height="42" viewBox="0 0 42 42" aria-hidden="true">
        <defs>
          <linearGradient id="blue" x1="0" y1="0" x2="1" y2="1">
            <stop offset="0" stopColor="#58b5ee" />
            <stop offset="1" stopColor="#3f7fc6" />
          </linearGradient>
          <linearGradient id="green" x1="0" y1="1" x2="1" y2="0">
            <stop offset="0" stopColor="#b5dc62" />
            <stop offset="1" stopColor="#4bb489" />
          </linearGradient>
        </defs>
        <path d="M39 1Q12 0 3 17-3 28 9 31 5 22 14 13 23 5 39 1z" fill="url(#blue)" />
        <path d="M15 23Q19 11 33 10q9 3 6 14-5 15-31 16Q29 33 31 22q0-7-6-6-6 1-10 7z" fill="url(#green)" />
        <path d="M6 29q12 6 23-9-4 16-20 15-5-2-3-6z" fill="#5faee3" />
      </svg>
      <div className="flex flex-col items-start">
        <span className="text-[21px] leading-6 font-bold text-[#6a9fd9]">极光下载站</span>
        <span className="font-['Liberation_Sans',sans-serif] text-[17px] leading-5 font-bold text-[#76c98b]">www.xz7.com</span>
      </div>
    </div>
  );
}

export default function App() {
  return (
    <div className="relative flex h-screen flex-col overflow-hidden bg-[#f5f6f9] font-['Open_Sans','Noto_Sans_CJK_SC',sans-serif] text-xs text-[#262e3d]">
      <TitleBar />
      <div className="bg-white">
        <MenuRow />
        <Ribbon />
      </div>
      <div className="flex min-h-0 flex-1">
        <Editor />
        <ScrollBar />
        <StylePane />
        <ToolRail />
      </div>
      <StatusBar />
      <NetMeter />
      <SiteMark />
    </div>
  );
}
